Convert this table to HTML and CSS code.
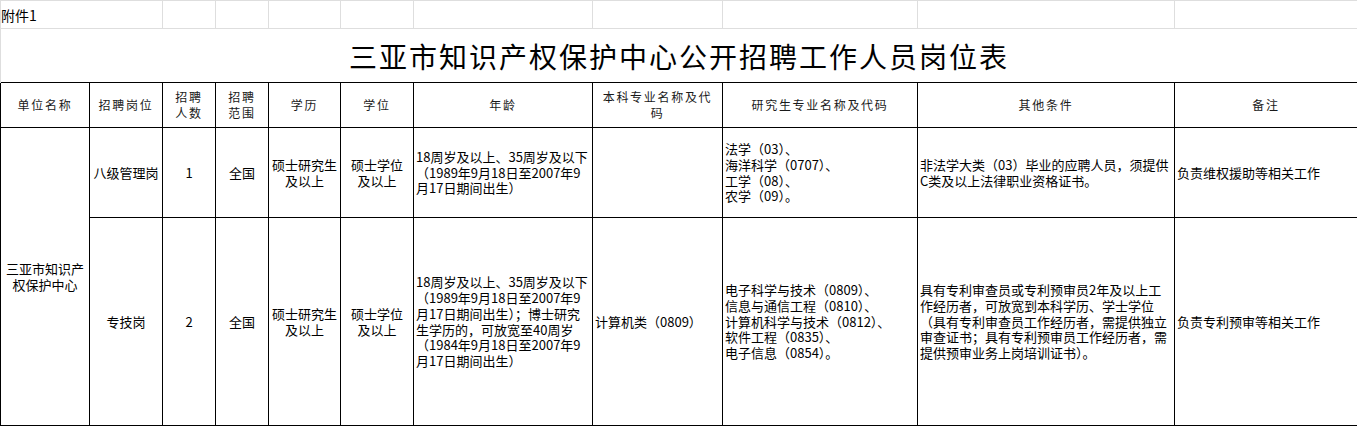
FILE: index.html
```html
<!DOCTYPE html>
<html lang="zh-CN">
<head>
<meta charset="utf-8">
<title>三亚市知识产权保护中心公开招聘工作人员岗位表</title>
<link rel="stylesheet" href="styles.css">
</head>
<body>
<table class="sheet">
  <colgroup>
    <col class="c1"><col class="c2"><col class="c3"><col class="c4"><col class="c5"><col class="c6">
    <col class="c7"><col class="c8"><col class="c9"><col class="c10"><col class="c11">
  </colgroup>
  <tr class="r-note">
    <td class="g note" colspan="2">附件1</td>
    <td class="g"></td><td class="g"></td><td class="g"></td><td class="g"></td>
    <td class="g"></td><td class="g"></td><td class="g"></td><td class="g"></td><td class="g"></td>
  </tr>
  <tr class="r-title">
    <td class="title" colspan="11">三亚市知识产权保护中心公开招聘工作人员岗位表</td>
  </tr>
  <tr class="r-head">
    <th>单位名称</th>
    <th>招聘岗位</th>
    <th>招聘<br>人数</th>
    <th>招聘<br>范围</th>
    <th>学历</th>
    <th>学位</th>
    <th>年龄</th>
    <th>本科专业名称及代<br>码</th>
    <th>研究生专业名称及代码</th>
    <th>其他条件</th>
    <th>备注</th>
  </tr>
  <tr class="r-1">
    <td class="ctr" rowspan="2">三亚市知识产<br>权保护中心</td>
    <td class="ctr">八级管理岗</td>
    <td class="ctr">1</td>
    <td class="ctr">全国</td>
    <td class="ctr">硕士研究生<br>及以上</td>
    <td class="ctr">硕士学位<br>及以上</td>
    <td class="lft">18周岁及以上、35周岁及以下<br>（1989年9月18日至2007年9<br>月17日期间出生）</td>
    <td class="lft"></td>
    <td class="lft">法学（03）、<br>海洋科学（0707）、<br>工学（08）、<br>农学（09）。</td>
    <td class="lft">非法学大类（03）毕业的应聘人员，须提供<br>C类及以上法律职业资格证书。</td>
    <td class="lft">负责维权援助等相关工作</td>
  </tr>
  <tr class="r-2">
    <td class="ctr">专技岗</td>
    <td class="ctr">2</td>
    <td class="ctr">全国</td>
    <td class="ctr">硕士研究生<br>及以上</td>
    <td class="ctr">硕士学位<br>及以上</td>
    <td class="lft">18周岁及以上、35周岁及以下<br>（1989年9月18日至2007年9<br>月17日期间出生）；博士研究<br>生学历的，可放宽至40周岁<br>（1984年9月18日至2007年9<br>月17日期间出生）</td>
    <td class="lft">计算机类（0809）</td>
    <td class="lft">电子科学与技术（0809）、<br>信息与通信工程（0810）、<br>计算机科学与技术（0812）、<br>软件工程（0835）、<br>电子信息（0854）。</td>
    <td class="lft">具有专利审查员或专利预审员2年及以上工<br>作经历者，可放宽到本科学历、学士学位<br>（具有专利审查员工作经历者，需提供独立<br>审查证书；具有专利预审员工作经历者，需<br>提供预审业务上岗培训证书）。</td>
    <td class="lft">负责专利预审等相关工作</td>
  </tr>
</table>
</body>
</html>
```

FILE: styles.css
```css
html, body {
  margin: 0;
  padding: 0;
  background: #ffffff;
}

body {
  font-family: "Noto Sans CJK SC", "Liberation Sans", sans-serif;
  color: #000;
}

.sheet {
  width: 1357px;
  border-collapse: collapse;
  table-layout: fixed;
}

.c1 { width: 89px; }
.c2 { width: 73px; }
.c3 { width: 53px; }
.c4 { width: 53px; }
.c5 { width: 72px; }
.c6 { width: 73px; }
.c7 { width: 179px; }
.c8 { width: 130px; }
.c9 { width: 195px; }
.c10 { width: 257px; }
.c11 { width: 183px; }

.sheet td,
.sheet th {
  padding: 0;
  overflow: hidden;
}

.r-note { height: 28px; }
.r-title { height: 54px; }
.r-head { height: 45px; }
.r-1 { height: 90px; }
.r-2 { height: 208px; }

.g {
  border: 1px solid #dedede;
}

.note {
  font-size: 14px;
  line-height: 16px;
  padding-left: 3px;
  vertical-align: middle;
  text-align: left;
  white-space: nowrap;
}

.title {
  border-left: 1px solid #dedede;
  border-right: 1px solid #dedede;
  text-align: center;
  vertical-align: middle;
  font-size: 28px;
  letter-spacing: 2px;
  line-height: 34px;
  padding-top: 2px;
  font-weight: 400;
}

.r-head th {
  border: 1px solid #000;
  font-weight: 400;
  font-size: 12px;
  letter-spacing: 1.7px;
  line-height: 16px;
  color: #1a1a1a;
  text-align: center;
  vertical-align: middle;
}

.r-1 td,
.r-2 td {
  border: 1px solid #000;
  font-size: 13px;
  line-height: 15.7px;
  vertical-align: middle;
  white-space: nowrap;
}

.ctr {
  text-align: center;
}

.lft {
  text-align: left;
  padding-left: 2px !important;
}
```
